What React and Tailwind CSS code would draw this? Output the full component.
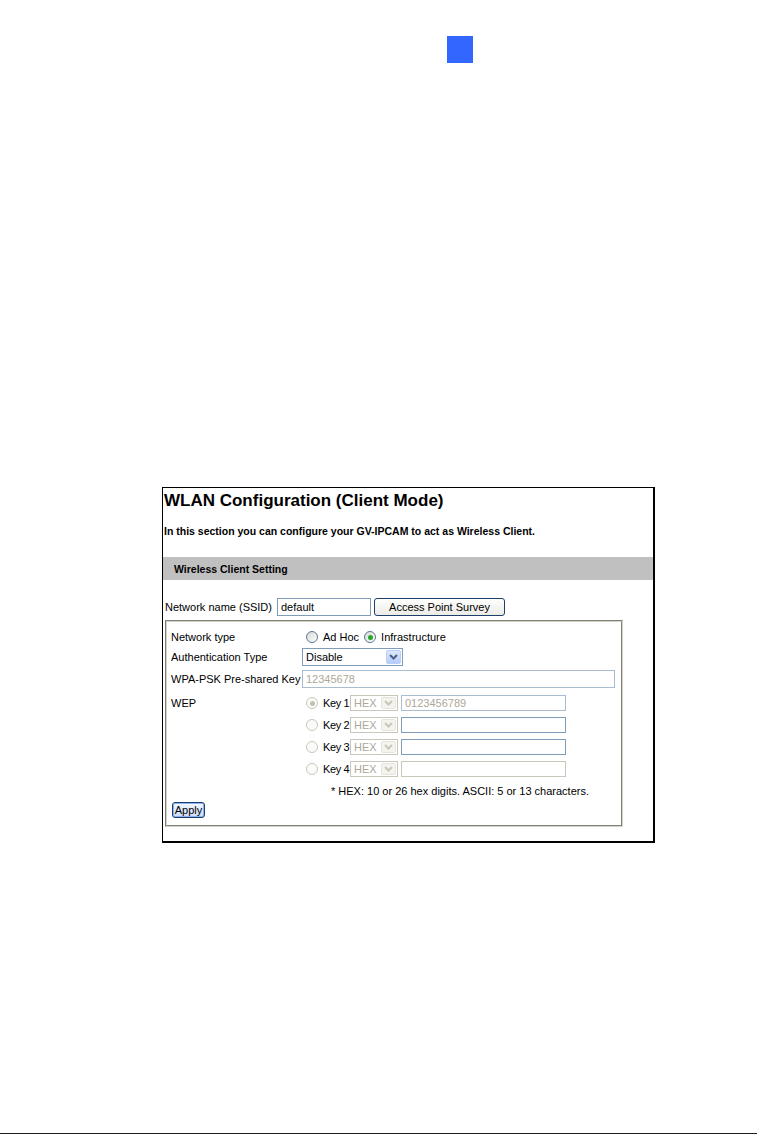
import React from "react";

// XP-era form controls, drawn with plain boxes
const Radio = ({ checked, disabled }) => (
  <span
    className={`flex h-[12px] w-[12px] shrink-0 items-center justify-center rounded-full border ${
      disabled ? "border-[#cac8bb] bg-[#fbfbf9]" : "border-[#5a7896] bg-gradient-to-br from-[#d8d8d2] to-white"
    }`}
  >
    {checked && (
      <span className={`h-[5px] w-[5px] rounded-full ${disabled ? "bg-[#c3c1b4]" : "bg-[#2aa52a]"}`} />
    )}
  </span>
);

const Chevron = ({ color }) => (
  <svg width="9" height="6" viewBox="0 0 9 6">
    <path d="M1 1 L4.5 4.5 L8 1" fill="none" stroke={color} strokeWidth="2" />
  </svg>
);

const Select = ({ value, width, disabled }) => (
  <div
    className={`flex h-full items-stretch border bg-white ${disabled ? "border-[#c9c7ba] text-[#aca899]" : "border-[#7f9db9] text-black"}`}
    style={{ width }}
  >
    <span className="flex flex-1 items-center pl-[3px]">{value}</span>
    {disabled ? (
      <span className="m-px flex w-[15px] items-center justify-center rounded-[2px] border border-[#e6e5dd] bg-[#f4f3ee]">
        <Chevron color="#c9c7ba" />
      </span>
    ) : (
      <span className="m-px flex w-[15px] items-center justify-center rounded-[2px] border border-[#bad0f7] bg-gradient-to-b from-[#dce7fd] to-[#b5cbf8]">
        <Chevron color="#4d6185" />
      </span>
    )}
  </div>
);

const TextBox = ({ value, width, tone = "blue", muted }) => {
  const border = tone === "grey" ? "border-[#c9c7ba]" : tone === "soft" ? "border-[#a9bcd0]" : "border-[#7f9db9]";
  return (
    <div
      className={`flex h-full items-center border bg-white pl-[3px] ${border} ${muted ? "text-[#aca899]" : "text-black"}`}
      style={{ width }}
    >
      {value}
    </div>
  );
};

const keys = [
  { n: 1, value: "0123456789", tone: "soft", muted: true, checked: true },
  { n: 2, value: "", tone: "blue" },
  { n: 3, value: "", tone: "blue" },
  { n: 4, value: "", tone: "grey" },
];

export default function App() {
  return (
    <div className="flex h-[1134px] w-[757px] flex-col bg-white font-['Liberation_Sans',Arial,sans-serif] text-black">
      {/* page marker */}
      <div className="ml-[447px] mt-[36px] h-[27px] w-[26px] bg-[#3366ff]" />

      {/* captured settings page */}
      <div className="ml-[162px] mt-[424px] flex w-[493px] flex-col border-b-2 border-l border-r-2 border-t border-black pb-[14px] pt-[3px]">
        <h1 className="h-[20px] pl-px text-[17px] font-bold leading-[20px]">WLAN Configuration (Client Mode)</h1>
        <p className="mt-[14px] h-[13px] pl-px text-[10.5px] font-bold leading-[13px]">
          In this section you can configure your GV-IPCAM to act as Wireless Client.
        </p>

        <div className="mt-[19px] flex h-[23px] items-center bg-[#c0c0c0] pl-[11px] pt-[2px] text-[10.5px] font-bold">
          Wireless Client Setting
        </div>

        <div className="mt-[18px] flex h-[18px] items-center pl-[2px] text-[11px]">
          <span className="w-[112px]">Network name (SSID)</span>
          <TextBox value="default" width={94} />
          <button className="ml-[3px] h-full w-[131px] rounded-[3px] border border-[#1c3f6e] bg-gradient-to-b from-white to-[#ecebe6] text-[11px]">
            Access Point Survey
          </button>
        </div>

        <div className="ml-[2px] mt-[4px] w-[458px] border-2 border-[#d5d2c6] pb-[7px] pl-[4px] pt-[5px] text-[11px] [border-style:groove]">
          <div className="flex h-[20px] items-center">
            <span className="w-[131px]">Network type</span>
            <span className="ml-[4px]"><Radio /></span>
            <span className="ml-[5px]">Ad Hoc</span>
            <span className="ml-[5px]"><Radio checked /></span>
            <span className="ml-[5px]">Infrastructure</span>
          </div>

          <div className="mt-px flex h-[18px] items-center">
            <span className="w-[131px]">Authentication Type</span>
            <Select value="Disable" width={101} />
          </div>

          <div className="mt-[4px] flex h-[18px] items-center">
            <span className="w-[131px] whitespace-nowrap">WPA-PSK Pre-shared Key</span>
            <TextBox value="12345678" width={313} tone="soft" muted />
          </div>

          {keys.map((k, i) => (
            <div key={k.n} className={`flex h-[16px] items-center ${i === 0 ? "mt-[7px]" : "mt-[6px]"}`}>
              <span className="w-[131px]">{i === 0 ? "WEP" : ""}</span>
              <span className="ml-[4px]"><Radio checked={k.checked} disabled /></span>
              <span className="ml-[5px] w-[27px] whitespace-nowrap tracking-[-0.4px]">Key {k.n}</span>
              <Select value="HEX" width={48} disabled />
              <span className="ml-[3px] h-full">
                <TextBox value={k.value} width={165} tone={k.tone} muted={k.muted} />
              </span>
            </div>
          ))}

          <p className="ml-[160px] mt-[8px] h-[13px] leading-[13px]">
            * HEX: 10 or 26 hex digits. ASCII: 5 or 13 characters.
          </p>

          <button className="ml-px mt-[4px] h-[16px] w-[33px] rounded-[3px] border border-[#1c3f6e] bg-gradient-to-b from-[#f4f8ff] to-[#cfdcf7] text-[11px] leading-none shadow-[inset_0_0_0_1px_#8cb0f0]">
            Apply
          </button>
        </div>
      </div>

      <div className="mt-auto h-px w-full bg-[#1b1b1b]" />
    </div>
  );
}
